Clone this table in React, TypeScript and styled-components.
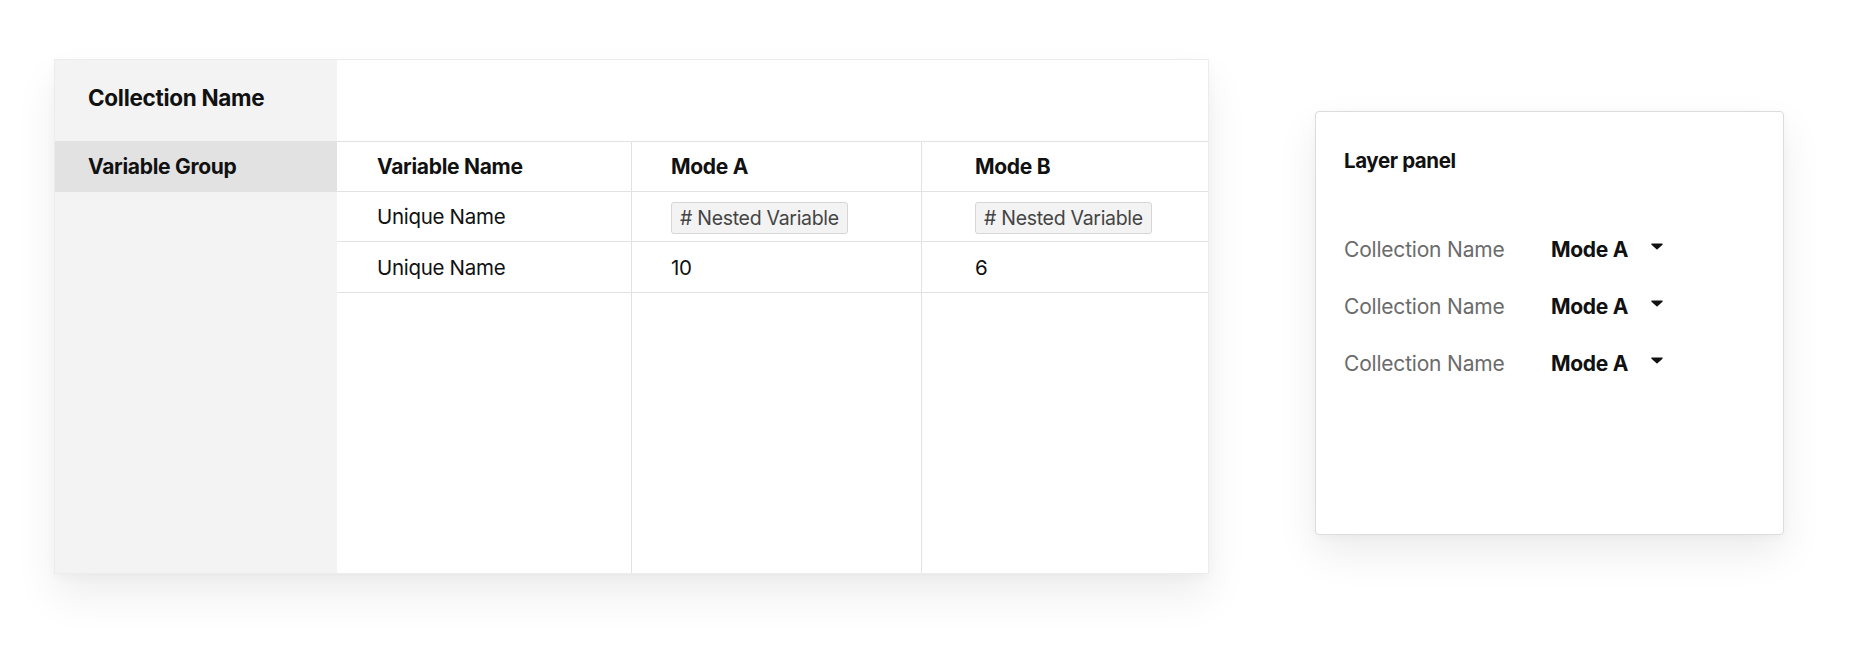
import styled, {createGlobalStyle} from "styled-components";

const GlobalStyle = createGlobalStyle`
  body {
    margin: 0;
    background: #ffffff;
    font-family: Inter, "Noto Sans", sans-serif;
    color: #111111;
  }
`

const rows = [
    {name: "Unique Name", a: "# Nested Variable", b: "# Nested Variable", tag: true},
    {name: "Unique Name", a: "10", b: "6", tag: false},
]

const layers = ["Collection Name", "Collection Name", "Collection Name"]

export default function App() {
    return <>
        <GlobalStyle/>
        <Page>
            <Card>
                <Sidebar>
                    <SidebarTitle>Collection Name</SidebarTitle>
                    <GroupLabel>Variable Group</GroupLabel>
                </Sidebar>
                <Main>
                    <TopBlank/>
                    <Table>
                        <Cell $head $pad={40}>Variable Name</Cell>
                        <Cell $head $pad={39}>Mode A</Cell>
                        <Cell $head $pad={53} $last>Mode B</Cell>
                        {rows.map((r, i) => (
                            <Row key={i}>
                                <Cell $pad={40}>{r.name}</Cell>
                                <Cell $pad={39}>{r.tag ? <Tag>{r.a}</Tag> : r.a}</Cell>
                                <Cell $pad={53} $last>{r.tag ? <Tag>{r.b}</Tag> : r.b}</Cell>
                            </Row>
                        ))}
                        <Filler/>
                        <Filler/>
                        <Filler $last/>
                    </Table>
                </Main>
            </Card>

            <Panel>
                <PanelTitle>Layer panel</PanelTitle>
                <LayerList>
                    {layers.map((l, i) => (
                        <LayerRow key={i}>
                            <LayerName>{l}</LayerName>
                            <ModeSelect>
                                Mode A
                                <Caret viewBox="0 0 12 7">
                                    <path d="M1 0.6h10c.6 0 .9.7.5 1.1L6.5 6.2a.7.7 0 0 1-1 0L.5 1.7C.1 1.3.4.6 1 .6z"
                                          fill="#111"/>
                                </Caret>
                            </ModeSelect>
                        </LayerRow>
                    ))}
                </LayerList>
            </Panel>
        </Page>
    </>
}

const Page = styled.div`
  display: flex;
  align-items: flex-start;
  gap: 106px;
  padding: 59px 0 0 54px;
  height: 662px;
  box-sizing: border-box;
`

const Card = styled.div`
  display: flex;
  width: 1155px;
  height: 515px;
  background: #ffffff;
  border: 1px solid #ececec;
  box-sizing: border-box;
  box-shadow: 0 22px 40px rgba(0, 0, 0, 0.07), 0 4px 10px rgba(0, 0, 0, 0.03);
`

const Sidebar = styled.div`
  width: 282px;
  flex-shrink: 0;
  background: #f3f3f3;
  display: flex;
  flex-direction: column;
`

const SidebarTitle = styled.div`
  height: 81px;
  display: flex;
  align-items: center;
  padding-left: 33px;
  padding-bottom: 6px;
  box-sizing: border-box;
  font-size: 22.5px;
  font-weight: 700;
  letter-spacing: -0.3px;
`

const GroupLabel = styled.div`
  height: 51px;
  display: flex;
  align-items: center;
  padding-left: 33px;
  background: #e2e2e2;
  font-size: 21px;
  font-weight: 700;
  letter-spacing: -0.3px;
`

const Main = styled.div`
  flex: 1;
  display: flex;
  flex-direction: column;
`

const TopBlank = styled.div`
  height: 81px;
  border-bottom: 1px solid #e2e2e2;
`

const Table = styled.div`
  flex: 1;
  display: grid;
  grid-template-columns: 295px 290px 1fr;
  grid-template-rows: 50px 50px 51px 1fr;
`

const Row = styled.div`
  display: contents;
`

const Cell = styled.div<{ $head?: boolean; $pad: number; $last?: boolean }>`
  display: flex;
  align-items: center;
  padding-left: ${p => p.$pad}px;
  border-bottom: 1px solid #e2e2e2;
  border-right: ${p => p.$last ? "none" : "1px solid #e2e2e2"};
  font-size: ${p => p.$head ? "21px" : "20.5px"};
  font-weight: ${p => p.$head ? 700 : 400};
  letter-spacing: -0.3px;
  color: #111111;
`

const Filler = styled.div<{ $last?: boolean }>`
  border-right: ${p => p.$last ? "none" : "1px solid #e2e2e2"};
`

const Tag = styled.span`
  display: inline-flex;
  align-items: center;
  height: 32px;
  padding: 0 8px;
  box-sizing: border-box;
  background: #f3f3f3;
  border: 1px solid #d6d6d6;
  border-radius: 3px;
  font-size: 19.5px;
  color: #444444;
  letter-spacing: -0.3px;
  margin-top: 2px;
`

const Panel = styled.div`
  margin-top: 52px;
  width: 469px;
  height: 424px;
  box-sizing: border-box;
  background: #ffffff;
  border: 1px solid #dcdcdc;
  border-radius: 4px;
  padding: 36px 28px;
  box-shadow: 0 18px 40px rgba(0, 0, 0, 0.08), 0 2px 8px rgba(0, 0, 0, 0.03);
`

const PanelTitle = styled.div`
  font-size: 20.5px;
  font-weight: 700;
  letter-spacing: -0.4px;
  color: #111111;
`

const LayerList = styled.div`
  margin-top: 64px;
  display: flex;
  flex-direction: column;
  gap: 33px;
`

const LayerRow = styled.div`
  display: flex;
  align-items: center;
  height: 24px;
`

const LayerName = styled.span`
  width: 207px;
  font-size: 21px;
  color: #6b6b6b;
  letter-spacing: -0.2px;
`

const ModeSelect = styled.span`
  display: flex;
  align-items: center;
  gap: 23px;
  font-size: 21px;
  font-weight: 700;
  letter-spacing: -0.3px;
  color: #111111;
`

const Caret = styled.svg`
  width: 12px;
  height: 7px;
  margin-top: -6px;
`
